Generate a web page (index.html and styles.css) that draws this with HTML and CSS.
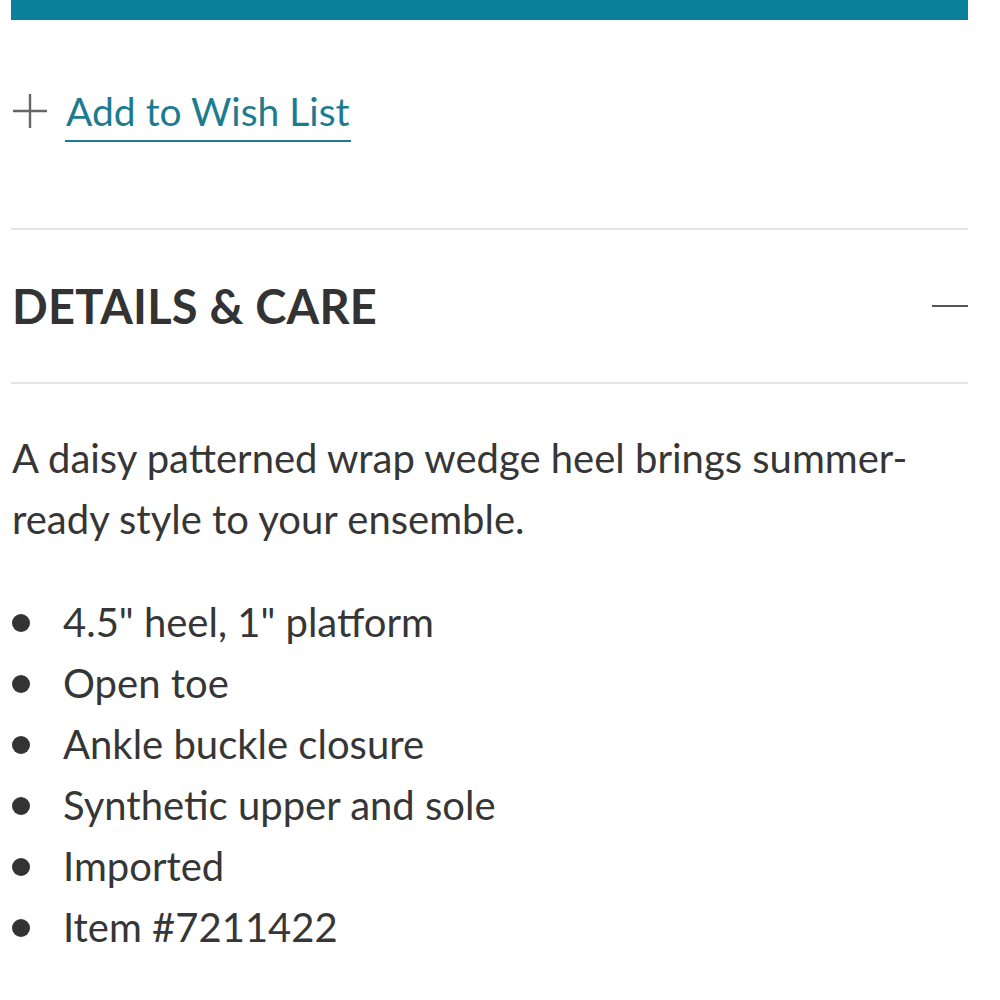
FILE: index.html
```html
<!DOCTYPE html>
<html>
<head>
<meta charset="utf-8">
<link rel="stylesheet" href="styles.css">
</head>
<body>
<div class="page">
  <div class="cta-bar"></div>
  <div class="wish">
    <svg class="plus" width="36" height="36" viewBox="0 0 36 36"><path d="M18 1V35M1 18H35" stroke="#666" stroke-width="2.4" fill="none"/></svg>
    <a class="wish-link" href="#">Add to Wish List</a>
  </div>
  <div class="section-head">
    <h2 class="title">DETAILS &amp; CARE</h2>
    <span class="minus"></span>
  </div>
  <div class="details">
    <p class="desc">A daisy patterned wrap wedge heel brings summer-ready style to your ensemble.</p>
    <ul class="features">
      <li>4.5" heel, 1" platform</li>
      <li>Open toe</li>
      <li>Ankle buckle closure</li>
      <li>Synthetic upper and sole</li>
      <li>Imported</li>
      <li>Item #7211422</li>
    </ul>
  </div>
</div>
</body>
</html>
```
FILE: styles.css
```css
html, body {
  margin: 0;
  padding: 0;
  background: #fff;
}
.page {
  width: 957px;
  margin-left: 11px;
  font-family: Lato, "Open Sans", sans-serif;
  color: #363636;
}
.cta-bar {
  height: 20px;
  background: #0a819a;
}
.wish {
  display: flex;
  align-items: flex-start;
  gap: 17px;
  padding: 62px 0 0 1px;
  height: 134px;
  box-sizing: border-box;
}
.plus {
  margin-top: 11px;
}
.wish-link {
  font-size: 39px;
  color: #1d7b90;
  text-decoration: none;
  border-bottom: 2.5px solid #1d7b90;
  line-height: 58px;
  padding: 0 1px;
}
.section-head {
  margin-top: 74px;
  border-top: 2px solid #e4e4e4;
  border-bottom: 2px solid #e4e4e4;
  height: 156px;
  box-sizing: border-box;
  display: flex;
  align-items: center;
  justify-content: space-between;
}
.title {
  margin: 0 0 0 1px;
  font-size: 47px;
  font-weight: 700;
  color: #333;
  letter-spacing: 0.2px;
}
.minus {
  width: 36px;
  height: 2px;
  background: #555;
}
.details {
  padding: 44px 0 0 1px;
}
.desc {
  margin: 0;
  font-size: 40px;
  line-height: 61px;
  width: 920px;
}
.features {
  list-style: none;
  margin: 42px 0 0;
  padding: 0;
}
.features li {
  font-size: 40px;
  line-height: 61px;
  display: flex;
  align-items: center;
}
.features li::before {
  content: "";
  width: 18px;
  height: 18px;
  border-radius: 50%;
  background: #333;
  margin-right: 33px;
  flex: none;
}
```
